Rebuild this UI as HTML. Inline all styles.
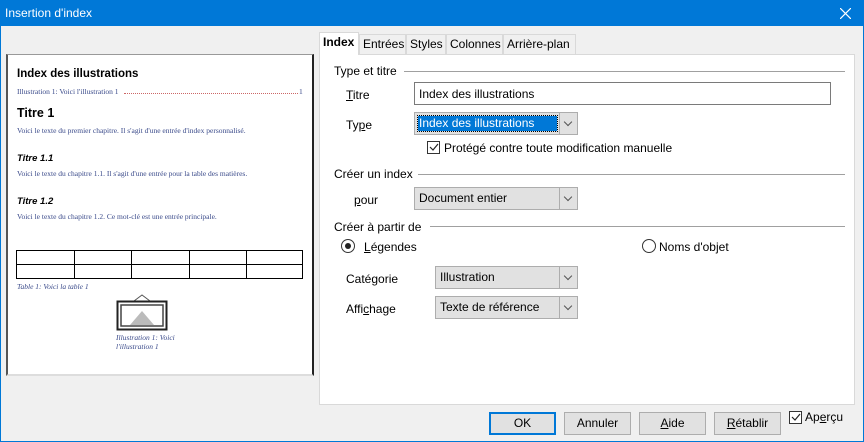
<!DOCTYPE html>
<html><head><meta charset="utf-8"><style>
*{margin:0;padding:0;box-sizing:border-box}
body{width:864px;height:442px;background:#f0f0f0;font-family:"Liberation Sans","DejaVu Sans",sans-serif;font-size:12px;color:#000;position:relative;overflow:hidden}
.a{position:absolute;white-space:nowrap}
.sel{position:absolute;background:#e1e1e1;border:1px solid #adadad;height:23px}
.sel .t{position:absolute;left:3px;top:3px;height:15px;line-height:15px;padding-left:1px}
.sel .ar{position:absolute;right:0;top:0;width:18px;height:21px;border-left:1px solid #adadad}
.sel .ar:after{content:"";position:absolute;left:5px;top:6px;width:5px;height:5px;border-right:1px solid #555;border-bottom:1px solid #555;transform:rotate(45deg)}
.btn{position:absolute;top:412px;width:67px;height:23px;background:#e1e1e1;border:1px solid #adadad;text-align:center;line-height:21px}
.ln{position:absolute;height:1px;background:#a0a0a0}
.p{font-family:"Liberation Serif",serif;font-size:7.5px;color:#3a4a8a}
.tab{position:absolute;top:34px;height:20px;border:1px solid #d9d9d9;border-bottom:none;background:#f0f0f0;line-height:19px;padding:0 3px}
u{text-decoration:underline}
</style></head><body>
<div class="a" style="left:0;top:0;width:864px;height:26px;background:#0078d7"></div>
<div class="a" style="left:5px;top:6px;color:#fff;font-size:12px">Insertion d'index</div>
<svg class="a" style="left:840px;top:8px" width="11" height="11"><path d="M0 0L11 11M11 0L0 11" stroke="#fff" stroke-width="1.2"/></svg>
<div class="a" style="left:0;top:26px;width:1px;height:416px;background:#0078d7"></div>
<div class="a" style="left:863px;top:26px;width:1px;height:416px;background:#0078d7"></div>
<div class="a" style="left:0;top:441px;width:864px;height:1px;background:#0078d7"></div>

<!-- preview -->
<div class="a" style="left:6px;top:54px;width:308px;height:322px;background:#fff;border:1px solid #999;border-left:2px solid #555;border-right:2px solid #222;border-bottom:2px solid #ddd"></div>
<div class="a" style="left:17px;top:68px;font-weight:bold;font-size:11.5px">Index des illustrations</div>
<div class="a p" style="left:17px;top:87px">Illustration 1: Voici l'illustration 1</div>
<div class="a" style="left:124px;top:93px;width:174px;border-top:1px dotted #c66"></div>
<div class="a p" style="left:299px;top:87px">1</div>
<div class="a" style="left:17px;top:106px;font-weight:bold;font-size:12.5px">Titre 1</div>
<div class="a p" style="left:17px;top:126px">Voici le texte du premier chapitre. Il s'agit d'une entrée d'index personnalisé.</div>
<div class="a" style="left:17px;top:153px;font-weight:bold;font-style:italic;font-size:9.5px">Titre 1.1</div>
<div class="a p" style="left:17px;top:169px">Voici le texte du chapitre 1.1. Il s'agit d'une entrée pour la table des matières.</div>
<div class="a" style="left:17px;top:196px;font-weight:bold;font-style:italic;font-size:9.5px">Titre 1.2</div>
<div class="a p" style="left:17px;top:212px">Voici le texte du chapitre 1.2. Ce mot-clé est une entrée principale.</div>
<svg class="a" style="left:16px;top:250px" width="288" height="30"><g fill="none" stroke="#000"><rect x="0.5" y="0.5" width="286" height="28"/><path d="M0 14.5H287M58.5 0V29M115.5 0V29M173.5 0V29M230.5 0V29"/></g></svg>
<div class="a p" style="left:17px;top:282px;font-style:italic">Table 1: Voici la table 1</div>
<svg class="a" style="left:116px;top:293px" width="52" height="40"><path d="M18 8L26 2L34 8" stroke="#555" fill="none"/><rect x="1.5" y="8.5" width="49" height="28" fill="#fff" stroke="#222" stroke-width="2"/><rect x="5" y="12" width="42" height="21" fill="none" stroke="#444" stroke-width="1.5"/><path d="M14 32L26 18L38 32Z" fill="#bbb"/></svg>
<div class="a p" style="left:116px;top:333px;font-style:italic">Illustration 1: Voici</div>
<div class="a p" style="left:116px;top:342px;font-style:italic">l'illustration 1</div>

<!-- tabs -->
<div class="a" style="left:319px;top:54px;width:536px;height:351px;background:#fff;border:1px solid #d9d9d9"></div>
<div class="tab" style="left:319px;top:32px;height:23px;background:#fff;font-weight:bold;width:40px">Index</div>
<div class="tab" style="left:359px;width:47px">Entrées</div>
<div class="tab" style="left:406px;width:40px">Styles</div>
<div class="tab" style="left:446px;width:57px">Colonnes</div>
<div class="tab" style="left:503px;width:73px">Arrière-plan</div>

<div class="a" style="left:334px;top:64px">Type et titre</div><div class="ln" style="left:404px;top:71px;width:441px"></div>
<div class="a" style="left:346px;top:88px"><u>T</u>itre</div>
<div class="a" style="left:414px;top:82px;width:417px;height:23px;border:1px solid #7a7a7a;background:#fff"><span class="a" style="left:4px;top:4px">Index des illustrations</span></div>
<div class="a" style="left:346px;top:118px">Ty<u>p</u>e</div>
<div class="sel" style="left:414px;top:112px;width:164px"><div class="t" style="background:#0078d7;color:#fff;width:139px;outline:1px dotted #000">Index des illustrations</div><div class="ar"></div></div>
<div class="a" style="left:427px;top:141px;width:13px;height:13px;border:1px solid #333;background:#fff"></div>
<svg class="a" style="left:429px;top:143px" width="10" height="9"><path d="M1 4L4 7L9 1" stroke="#222" fill="none" stroke-width="1.2"/></svg>
<div class="a" style="left:444px;top:141px">Protégé contre toute modification manuelle</div>
<div class="a" style="left:334px;top:167px">Créer un index</div><div class="ln" style="left:418px;top:174px;width:427px"></div>
<div class="a" style="left:354px;top:193px"><u>p</u>our</div>
<div class="sel" style="left:414px;top:187px;width:164px"><div class="t">Document entier</div><div class="ar"></div></div>
<div class="a" style="left:334px;top:220px">Créer à partir de</div><div class="ln" style="left:430px;top:226px;width:415px"></div>
<div class="a" style="left:341px;top:239px;width:14px;height:14px;border:1px solid #333;border-radius:50%;background:#fff"></div>
<div class="a" style="left:345px;top:243px;width:6px;height:6px;border-radius:50%;background:#222"></div>
<div class="a" style="left:364px;top:240px"><u>L</u>égendes</div>
<div class="a" style="left:642px;top:239px;width:14px;height:14px;border:1px solid #333;border-radius:50%;background:#fff"></div>
<div class="a" style="left:659px;top:240px">Noms d'objet</div>
<div class="a" style="left:346px;top:272px">Catégorie</div>
<div class="sel" style="left:435px;top:266px;width:143px"><div class="t">Illustration</div><div class="ar"></div></div>
<div class="a" style="left:346px;top:302px">Affi<u>c</u>hage</div>
<div class="sel" style="left:435px;top:296px;width:143px"><div class="t">Texte de référence</div><div class="ar"></div></div>

<div class="btn" style="left:489px;border:2px solid #0078d7;line-height:19px">OK</div>
<div class="btn" style="left:564px">Annuler</div>
<div class="btn" style="left:639px"><u>A</u>ide</div>
<div class="btn" style="left:714px"><u>R</u>établir</div>
<div class="a" style="left:789px;top:411px;width:13px;height:13px;border:1px solid #333;background:#fff"></div>
<svg class="a" style="left:791px;top:413px" width="10" height="9"><path d="M1 4L4 7L9 1" stroke="#222" fill="none" stroke-width="1.2"/></svg>
<div class="a" style="left:805px;top:410px">Ap<u>e</u>rçu</div>
</body></html>
